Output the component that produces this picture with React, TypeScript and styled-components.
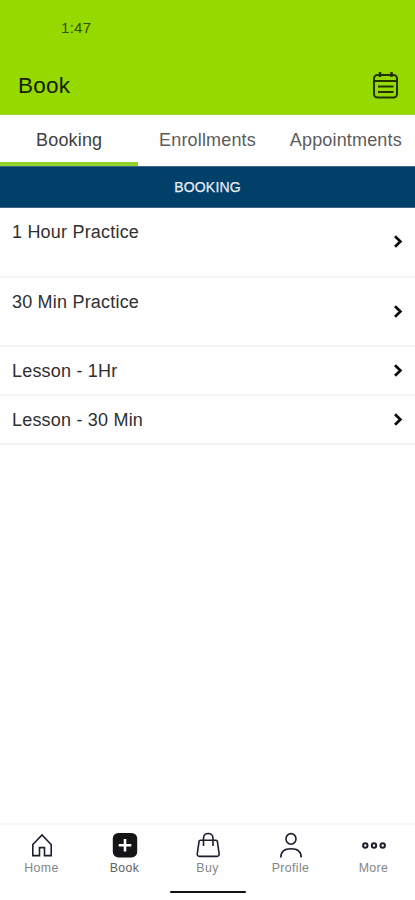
import React from "react";
import styled, { createGlobalStyle } from "styled-components";

const GlobalStyle = createGlobalStyle`
  * { box-sizing: border-box; }
  body { margin: 0; background: #fff; }
`;

const Screen = styled.div`
  display: flex;
  flex-direction: column;
  width: 415px;
  height: 900px;
  overflow: hidden;
  background: #fefefe;
  color: #303030;
  font-family: "Liberation Sans", Arial, sans-serif;
`;

const Header = styled.header`
  flex: none;
  height: 115px;
  background: #96d900;
  border-bottom: 1px solid #a0d832;
`;

const StatusBar = styled.div`
  height: 56px;
  padding-left: 61px;
  font-size: 15px;
  letter-spacing: 0.3px;
  line-height: 56px;
  color: #31500a;
`;

const TitleBar = styled.div`
  display: flex;
  align-items: center;
  justify-content: space-between;
  height: 58px;
  padding: 0 16px 0 18px;
`;

const Title = styled.h1`
  margin: 0;
  padding-top: 2px;
  font-size: 22.5px;
  font-weight: 400;
  line-height: 26px;
  letter-spacing: 0.2px;
  color: #132100;
`;

const Tabs = styled.nav`
  display: grid;
  grid-template-columns: repeat(3, 1fr);
  flex: none;
  height: 51px;
`;

const Tab = styled.div<{ $active?: boolean }>`
  height: 51px;
  border-bottom: 4px solid ${(p) => (p.$active ? "#91d32b" : "transparent")};
  color: ${(p) => (p.$active ? "#404040" : "#5c5c5c")};
  font-size: 18px;
  letter-spacing: 0.16px;
  line-height: 51px;
  text-align: center;
  white-space: nowrap;
`;

const SectionTitle = styled.h2`
  flex: none;
  height: 42px;
  margin: 0;
  background: #004069;
  border-top: 1px solid #416783;
  border-bottom: 1px solid #416783;
  color: #e6edf5;
  font-size: 14px;
  font-weight: 400;
  letter-spacing: 0.2px;
  line-height: 40px;
  text-align: center;
  -webkit-text-stroke: 0.25px #e6edf5;
`;

const List = styled.ul`
  flex: 1;
  margin: 0;
  padding: 0;
  list-style: none;
`;

const Row = styled.li<{ $height: number }>`
  display: flex;
  align-items: center;
  justify-content: space-between;
  height: ${(p) => p.$height}px;
  padding: 0 11px 0 12px;
  border-bottom: 2px solid #f4f4f4;
`;

const RowLabel = styled.span`
  align-self: flex-start;
  padding-top: 14px;
  font-size: 18px;
  line-height: 21px;
  letter-spacing: 0.2px;
`;

const BottomBar = styled.nav`
  display: grid;
  grid-template-columns: repeat(5, 1fr);
  flex: none;
  height: 62px;
  padding-top: 6px;
  border-top: 2px solid #f6f6f6;
`;

const NavItem = styled.div<{ $active?: boolean }>`
  display: flex;
  flex-direction: column;
  align-items: center;
  gap: 1px;
  color: ${(p) => (p.$active ? "#626262" : "#858585")};
  font-size: 12.3px;
  letter-spacing: 0.4px;
  line-height: 16px;
`;

const NavIcon = styled.svg`
  display: block;
  width: 28px;
  height: 28px;
  fill: none;
  stroke: #1d1e2d;
  stroke-width: 1.6;
`;

const HomeIndicator = styled.div`
  flex: none;
  align-self: center;
  width: 76px;
  height: 2px;
  margin: 6px 0 7px;
  border-radius: 1px;
  background: #111;
`;

const CalendarIcon = () => (
  <svg width="27" height="28" viewBox="0 0 27 28" fill="none" stroke="#223300">
    <rect x="2" y="4" width="23" height="22.5" rx="3.5" strokeWidth="2" />
    <path d="M2 10h23" strokeWidth="2" />
    <path d="M8 1v5M19.5 1v5" strokeWidth="2.5" />
    <path d="M6 15.5h15.5M6 21h15.5" strokeWidth="1.8" />
  </svg>
);

const Chevron = () => (
  <svg width="12" height="14" viewBox="0 0 12 14" fill="none" stroke="#0c0c0c" strokeWidth="2.7">
    <path d="M3 1.2L8.4 6.5L3 11.8" />
  </svg>
);

const icons = {
  Home: <path d="M4.4 14L14 4l9.6 10M4.8 13.6v11h6.7v-8h5v8h6.7v-11" />,
  Book: (
    <>
      <rect x="1.8" y="2" width="24.4" height="24.4" rx="5.5" fill="#151517" stroke="none" />
      <path d="M14 7.9v12.6M7.7 14.2h12.6" stroke="#fff" strokeWidth="2.6" />
    </>
  ),
  Buy: (
    <path d="M5.1 10.2q.2-1 1.2-1h15.8q1 0 1.2 1l1.8 12.2q.4 3-2.2 3H5.5q-2.6 0-2.2-3zM9.5 15V7.2C9.5 .9 19 .9 19 7.2V15" />
  ),
  Profile: (
    <>
      <ellipse cx="14" cy="7.9" rx="5" ry="5.3" />
      <path d="M3.8 26.6q0-8.8 10.2-8.8t10.2 8.8" />
    </>
  ),
  More: (
    <g strokeWidth="2">
      <circle cx="5.3" cy="14.5" r="2.2" />
      <circle cx="14" cy="14.5" r="2.2" />
      <circle cx="22.7" cy="14.5" r="2.2" />
    </g>
  ),
};

const services = [
  { name: "1 Hour Practice", height: 70 },
  { name: "30 Min Practice", height: 69 },
  { name: "Lesson - 1Hr", height: 49 },
  { name: "Lesson - 30 Min", height: 49 },
];

export default function App() {
  return (
    <Screen>
      <GlobalStyle />
      <Header>
        <StatusBar>1:47</StatusBar>
        <TitleBar>
          <Title>Book</Title>
          <CalendarIcon />
        </TitleBar>
      </Header>
      <Tabs>
        <Tab $active>Booking</Tab>
        <Tab>Enrollments</Tab>
        <Tab>Appointments</Tab>
      </Tabs>
      <SectionTitle>BOOKING</SectionTitle>
      <List>
        {services.map((s) => (
          <Row key={s.name} $height={s.height}>
            <RowLabel>{s.name}</RowLabel>
            <Chevron />
          </Row>
        ))}
      </List>
      <BottomBar>
        {(Object.keys(icons) as (keyof typeof icons)[]).map((name) => (
          <NavItem key={name} $active={name === "Book"}>
            <NavIcon viewBox="0 0 28 28">{icons[name]}</NavIcon>
            {name}
          </NavItem>
        ))}
      </BottomBar>
      <HomeIndicator />
    </Screen>
  );
}
